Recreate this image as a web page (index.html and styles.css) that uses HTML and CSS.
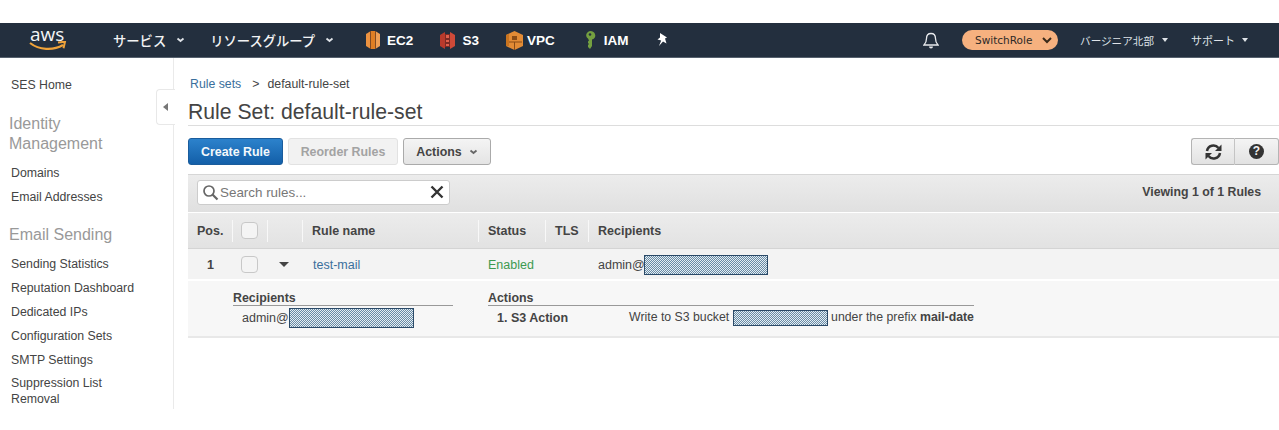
FILE: index.html
```html
<!DOCTYPE html>
<html lang="ja">
<head>
<meta charset="utf-8">
<title>Rule Set: default-rule-set</title>
<link rel="stylesheet" href="styles.css">
</head>
<body>
<svg class="defs" width="0" height="0" aria-hidden="true"><defs><pattern id="dither" width="2" height="2" patternUnits="userSpaceOnUse"><rect width="2" height="2" fill="#e6eef3"/><rect width="1" height="1" fill="#688ba6"/><rect x="1" y="1" width="1" height="1" fill="#688ba6"/></pattern></defs></svg>
<div class="topgap"></div>
<header class="nav">
  <div class="logo">
    <span class="logo-text">aws</span>
    <svg class="smile" width="38" height="11" viewBox="0 0 38 11"><path d="M1 2c9 7 23 8 33 2" fill="none" stroke="#f0a33a" stroke-width="2.200"/><path d="M29 1.500l7-.8-1.500 6.500" fill="none" stroke="#f0a33a" stroke-width="2"/></svg>
  </div>
  <a class="nav-menu first">サービス<svg class="chev" width="9" height="6" viewBox="0 0 9 6"><path d="M1.500 1.500l3 2.500 3-2.500" fill="none" stroke="#dfe3e8" stroke-width="1.800"/></svg></a>
  <a class="nav-menu second">リソースグループ<svg class="chev" width="9" height="6" viewBox="0 0 9 6"><path d="M1.500 1.500l3 2.500 3-2.500" fill="none" stroke="#dfe3e8" stroke-width="1.800"/></svg></a>
  <a class="pin ec2">
    <svg width="16" height="18" viewBox="0 0 16 18"><path d="M5 .5L1 3v12l4 2.500z" fill="#ec9240"/><path d="M6 0h4v18H6z" fill="#e07f24"/><path d="M11 .5L15 3v12l-4 2.500z" fill="#f0a055"/><path d="M5.300 0h.7v18h-.7zM10 0h.7v18H10z" fill="#a9581a"/></svg>EC2</a>
  <a class="pin s3">
    <svg width="15" height="19" viewBox="0 0 15 19"><path d="M0 4l5-3v17l-5-3z" fill="#b83a2c"/><path d="M15 4l-5-3v17l5-3z" fill="#cf4a38"/><path d="M5 3h5v13H5z" fill="#7c2a24"/><path d="M6 4h3v3H6zM6 9h3v2H6zM6 13h3v2H6z" fill="#e0604c"/></svg>S3</a>
  <a class="pin vpc">
    <svg width="17" height="19" viewBox="0 0 17 19"><path d="M8.500 0l8.500 4v11l-8.500 4L0 15V4z" fill="#e28b35"/><path d="M6 5h5v4H6zM1 10.500h15v1H1zM8 11.500h1V19H8z" fill="#8a4c16"/><path d="M0 4l3-1v12l-3 0z" fill="#c9741f"/></svg>VPC</a>
  <a class="pin iam">
    <svg width="12" height="18" viewBox="0 0 12 18"><path d="M6 0a5.500 4.500 0 0 1 2 8.600V15l-2 3-2-2v-2l1-1-1-1v-1.500l1-1-1-1.900A5.500 4.500 0 0 1 6 0z" fill="#74a040"/><circle cx="6" cy="3.500" r="1.300" fill="#232f3e"/></svg>IAM</a>
  <svg class="pushpin" width="11" height="14" viewBox="0 0 11 14"><path d="M3 0l7 4.500-2 1 1.500 5L6 8.500 2 13l2.200-5.500L.5 6.500 3 4.500z" fill="#fff"/></svg>
  <div class="nav-right">
    <svg class="bell" width="16" height="17" viewBox="0 0 16 17"><path d="M8 1.500c-3 0-4.500 2.300-4.500 5 0 3.500-1 5-2.500 6.500h14c-1.500-1.500-2.500-3-2.500-6.500 0-2.700-1.500-5-4.500-5z" fill="none" stroke="#e8eaed" stroke-width="1.300"/><path d="M6 14.500a2 2 0 0 0 4 0z" fill="#e8eaed"/></svg>
    <div class="switch">SwitchRole<svg width="10" height="7" viewBox="0 0 10 7"><path d="M1 1l4 4 4-4" fill="none" stroke="#3a2a1a" stroke-width="2"/></svg></div>
    <a class="nav-small region">バージニア北部<i class="caret"></i></a>
    <a class="nav-small support">サポート<i class="caret"></i></a>
  </div>
</header>
<div class="page">
  <aside class="side">
    <a class="side-link home">SES Home</a>
    <h3 class="side-head">Identity Management</h3>
    <a class="side-link">Domains</a>
    <a class="side-link">Email Addresses</a>
    <h3 class="side-head sending">Email Sending</h3>
    <a class="side-link">Sending Statistics</a>
    <a class="side-link">Reputation Dashboard</a>
    <a class="side-link">Dedicated IPs</a>
    <a class="side-link">Configuration Sets</a>
    <a class="side-link">SMTP Settings</a>
    <a class="side-link">Suppression List Removal</a>
    <div class="side-toggle"><i></i></div>
  </aside>
  <main class="main">
    <div class="crumbs"><a>Rule sets</a><span class="gt">&gt;</span><span>default-rule-set</span></div>
    <h1 class="title">Rule Set: default-rule-set</h1>
    <div class="actions">
      <button class="btn primary">Create Rule</button>
      <button class="btn disabled">Reorder Rules</button>
      <button class="btn">Actions <svg width="9" height="6" viewBox="0 0 9 6"><path d="M1.500 1.500l3 2.500 3-2.500" fill="none" stroke="#666" stroke-width="1.800"/></svg></button>
      <div class="tools">
        <button class="tool"><svg width="19" height="18" viewBox="0 0 19 18"><path d="M3 8A6.500 6.500 0 0 1 14.500 5" fill="none" stroke="#333" stroke-width="2.500"/><path d="M17.500 1.500V8h-6.500z" fill="#333"/><path d="M16 10A6.500 6.500 0 0 1 4.500 13" fill="none" stroke="#333" stroke-width="2.500"/><path d="M1.500 16.500V10H8z" fill="#333"/></svg></button>
        <button class="tool"><span class="help">?</span></button>
      </div>
    </div>
    <div class="toolbar">
      <div class="search">
        <svg width="17" height="17" viewBox="0 0 17 17"><circle cx="7" cy="7" r="5" fill="none" stroke="#666" stroke-width="1.700"/><path d="M10.500 10.500l5 5" stroke="#666" stroke-width="2.200"/></svg>
        <span class="placeholder">Search rules...</span>
        <svg class="clear" width="14" height="14" viewBox="0 0 14 14"><path d="M1.500 1.500l11 11M12.500 1.500l-11 11" stroke="#333" stroke-width="2.400"/></svg>
      </div>
      <span class="viewing">Viewing 1 of 1 Rules</span>
    </div>
    <div class="thead">
      <div class="c-pos th">Pos.</div>
      <div class="c-check th"><i class="box"></i></div>
      <div class="c-exp th"></div>
      <div class="c-name th">Rule name</div>
      <div class="c-status th">Status</div>
      <div class="c-tls th">TLS</div>
      <div class="c-rec th last">Recipients</div>
    </div>
    <div class="trow">
      <div class="c-pos strong">1</div>
      <div class="c-check"><i class="box"></i></div>
      <div class="c-exp"><i class="down"></i></div>
      <div class="c-name"><a class="link">test-mail</a></div>
      <div class="c-status enabled">Enabled</div>
      <div class="c-tls"></div>
      <div class="c-rec">admin@<svg class="mask m-row"><rect width="100%" height="100%" fill="url(#dither)"/></svg></div>
    </div>
    <div class="detail">
      <section class="d-rec">
        <h4 class="d-head">Recipients</h4>
        <div class="d-line indent">admin@<svg class="mask m-rec"><rect width="100%" height="100%" fill="url(#dither)"/></svg></div>
      </section>
      <section class="d-act">
        <h4 class="d-head">Actions</h4>
        <div class="d-line"><b class="act-name">1. S3 Action</b><span class="act-desc">Write to S3 bucket <svg class="mask m-bucket"><rect width="100%" height="100%" fill="url(#dither)"/></svg> under the prefix <b>mail-date</b></span></div>
      </section>
    </div>
  </main>
</div>
</body>
</html>
```
FILE: styles.css
```css
* { box-sizing: border-box; }
html, body { margin: 0; padding: 0; background: #fff; }
body { width: 1279px; height: 430px; overflow: hidden; font-family: "Liberation Sans", Arial, sans-serif; font-size: 12.500px; color: #444; }
a { color: inherit; text-decoration: none; }
h1, h3, h4 { margin: 0; font-weight: normal; }
.defs { position: absolute; }
.topgap { height: 23px; }

.nav { height: 35px; background: #232f3e; border-bottom: 1px solid #56616e; display: flex; align-items: center; color: #f2f3f4; font-family: "Liberation Sans", "Noto Sans CJK JP", sans-serif; }
.logo { margin-left: 30px; width: 38px; height: 28px; position: relative; flex: none; }
.logo-text { display: block; font-family: "Open Sans", "Liberation Sans", sans-serif; font-size: 19px; line-height: 21px; margin-top: -2px; color: #f4f5f6; }
.smile { position: absolute; left: -1px; top: 15px; }
.nav-menu { font-size: 13.300px; font-weight: 500; white-space: nowrap; display: flex; align-items: center; gap: 10px; }
.nav-menu.first { margin-left: 45px; }
.nav-menu.second { margin-left: 25px; }
.pin { display: flex; align-items: center; font-size: 13.500px; font-weight: bold; color: #fff; }
.pin svg { margin-right: 6px; }
.ec2 { margin-left: 31px; }
.s3 { margin-left: 27px; }
.s3 svg { margin-right: 7px; }
.vpc { margin-left: 27px; }
.vpc svg { margin-right: 4px; }
.iam { margin-left: 29px; }
.iam svg { margin-right: 8px; }
.pushpin { margin-left: 29px; }
.nav-right { margin-left: auto; display: flex; align-items: center; }
.bell { margin-right: 23px; }
.switch { width: 96px; height: 20px; background: #f6b17f; border-radius: 10px; color: #2c2a28; font-family: "DejaVu Sans", sans-serif; font-size: 10.500px; display: flex; align-items: center; justify-content: space-between; padding: 0 6px 0 13px; }
.nav-small { font-size: 11px; color: #dfe3e8; display: flex; align-items: center; gap: 8px; white-space: nowrap; }
.region { margin-left: 22px; font-size: 10.600px; }
.support { margin-left: 23px; margin-right: 31px; gap: 7px; }
.caret { width: 0; height: 0; border-left: 3.500px solid transparent; border-right: 3.500px solid transparent; border-top: 4px solid #dfe3e8; }

.page { display: flex; align-items: flex-start; }
.side { width: 174px; height: 351px; border-right: 1px solid #eaeaea; padding: 19px 20px 0 11px; position: relative; flex: none; display: flex; flex-direction: column; }
.side-link { display: block; font-size: 12.300px; line-height: 16px; color: #444; margin-bottom: 7.800px; }
.side-head { font-size: 16px; line-height: 20.500px; color: #999; margin: 13px 0 10px -2px; }
.side-head.sending { margin-top: 13px; margin-bottom: 10.500px; }
.side-toggle { position: absolute; left: 156px; top: 31px; width: 19px; height: 36px; background: #fff; border: 1px solid #e8e8e8; border-right: 0; border-radius: 4px 0 0 4px; display: flex; align-items: center; padding-left: 6px; }
.side-toggle i { width: 0; height: 0; border-top: 4.500px solid transparent; border-bottom: 4.500px solid transparent; border-right: 5px solid #777; }

.main { flex: 1; margin-left: 14px; min-width: 0; }
.crumbs { font-size: 12.300px; line-height: 16px; margin-top: 18px; margin-left: 2px; color: #444; display: flex; }
.crumbs a { color: #3a6f9c; }
.gt { margin: 0 8px 0 11px; }
.title { font-size: 21.200px; line-height: 26px; color: #444; margin-top: 7px; border-bottom: 1px solid #ddd; height: 27px; }
.actions { display: flex; align-items: flex-start; gap: 5px; margin-top: 12px; height: 28px; }
.btn { height: 27px; font-family: inherit; font-size: 12.400px; font-weight: bold; padding: 0 13px; border: 1px solid #aaa; border-radius: 3px; background: linear-gradient(#f4f4f4, #e4e4e4); color: #444; display: flex; align-items: center; gap: 7px; }
.btn.primary { width: 95px; justify-content: center; padding: 0; background: linear-gradient(#2c82cc, #135fa8); border-color: #1a5c9c; color: #f4f8fb; }
.btn.disabled { width: 110px; padding: 0; justify-content: center; background: #f2f2f2; border-color: #e2e2e2; color: #a3a3a3; }
.btn.disabled + .btn { width: 88px; justify-content: center; padding: 0; }
.tools { margin-left: auto; display: flex; }
.tool { width: 44px; height: 27px; padding: 0; border: 1px solid #b4b4b4; background: linear-gradient(#f4f4f4, #e2e2e2); display: flex; align-items: center; justify-content: center; }
.tool:first-child { border-radius: 3px 0 0 3px; border-right-color: #c4c4c4; }
.tool:last-child { border-radius: 0 3px 3px 0; border-left: 0; }
.help { width: 15px; height: 15px; border-radius: 50%; background: #333; color: #f2f2f2; font: bold 12px/15px "Liberation Sans", sans-serif; text-align: center; }
.toolbar { height: 38px; margin-top: 8px; background: linear-gradient(#ececec, #e0e0e0); border-top: 1px solid #d6d6d6; display: flex; align-items: center; padding: 0 18px 3px 9px; }
.search { width: 253px; height: 25px; background: #fff; border: 1px solid #ccc; border-radius: 3px; display: flex; align-items: center; padding: 0 4px; position: relative; }
.placeholder { font-size: 13.400px; color: #777; margin-left: 1px; }
.clear { margin-left: auto; margin-right: 1px; }
.viewing { margin-left: auto; font-weight: bold; font-size: 12.300px; color: #444; }

.thead, .trow { display: flex; align-items: center; }
.thead { height: 37px; background: linear-gradient(#ececec, #e2e2e2); border-top: 1px solid #fff; border-bottom: 1px solid #d4d4d4; font-weight: bold; }
.trow { height: 32px; padding-top: 1px; background: #f3f3f3; border-bottom: 2px solid #fff; }
.c-pos { width: 45px; padding-left: 9px; flex: none; }
.trow .c-pos { padding-left: 19px; }
.c-check { width: 35px; padding-left: 8px; flex: none; }
.c-exp { width: 35px; flex: none; padding-left: 11px; }
.c-name { width: 176px; flex: none; padding-left: 9px; }
.trow .c-name { padding-left: 10px; }
.c-status { width: 67px; flex: none; padding-left: 9px; }
.c-tls { width: 43px; flex: none; padding-left: 9px; }
.c-rec { flex: 1; padding-left: 9px; display: flex; align-items: center; }
.th { height: 22px; display: flex; align-items: center; border-right: 1px solid #f8f8f8; }
.th.last { border-right: 0; }
.box { display: block; width: 17px; height: 17px; border: 1px solid #c8c8c8; border-radius: 4px; background: #f4f4f4; }
.down { display: block; width: 0; height: 0; border-left: 5px solid transparent; border-right: 5px solid transparent; border-top: 5px solid #444; }
.strong { font-weight: bold; }
.link { color: #3a6f9c; }
.enabled { color: #3d9a50; }
.mask { display: inline-block; border: 1px solid #2b4a68; shape-rendering: crispEdges; }
.m-row { width: 124px; height: 20px; margin-left: -1px; }
.m-rec { width: 125px; height: 20px; vertical-align: middle; }
.m-bucket { width: 95px; height: 16px; vertical-align: middle; }
.detail { height: 57px; background: #f7f7f7; border-bottom: 2px solid #e8e8e8; display: flex; padding-left: 45px; }
.d-rec { width: 220px; margin-right: 35px; flex: none; }
.d-act { width: 486px; flex: none; }
.d-head { font-size: 12.400px; font-weight: bold; color: #444; line-height: 14px; margin-top: 10px; border-bottom: 1.500px solid #999; }
.d-line { height: 24px; display: flex; align-items: center; white-space: nowrap; }
.indent { padding-left: 9px; }
.act-name { width: 141px; padding-left: 9px; flex: none; }
.act-desc { display: block; font-size: 12.300px; }
```
